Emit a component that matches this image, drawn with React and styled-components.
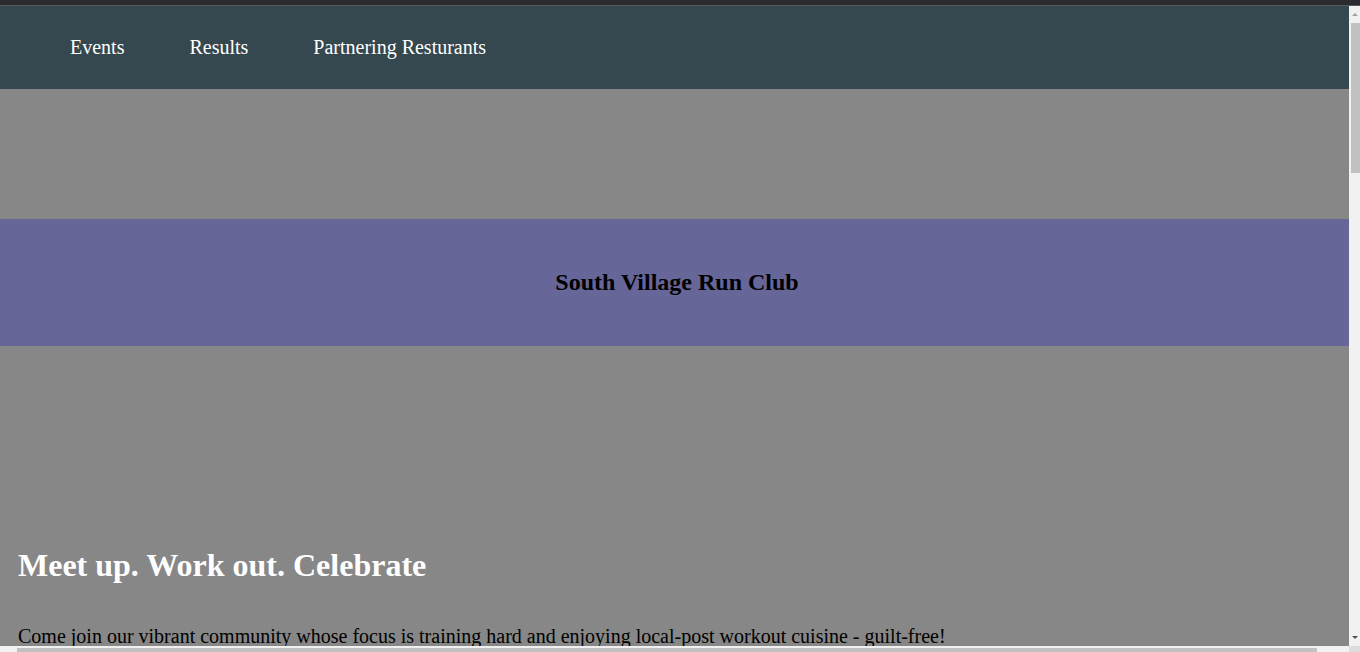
import React from 'react'
import styled, { createGlobalStyle } from 'styled-components'

const GlobalStyle = createGlobalStyle`
  html, body {
    margin: 0;
    padding: 0;
    height: 100%;
    overflow: hidden;
    font-family: "Liberation Serif", "Times New Roman", serif;
  }
  #root {
    height: 100%;
  }
`

// window shell: thin top strip, page viewport, and the scrollbars around it
const Frame = styled.div`
  display: grid;
  grid-template-columns: 1fr 11px;
  grid-template-rows: 6px 1fr 6px;
  height: 100%;
`

const TopStrip = styled.div`
  grid-column: 1 / 3;
  background: #2b2b2f;
  border-bottom: 1px solid #58595c;
`

const Scroller = styled.div`
  overflow: auto;
  min-height: 0;
  background: #878787;
  scrollbar-width: none;
  &::-webkit-scrollbar {
    display: none;
  }
`

const VBar = styled.div`
  display: flex;
  flex-direction: column;
  align-items: flex-end;
  background: #f1f1f1;
`

const Arrow = styled.div`
  width: 0;
  height: 0;
  margin: ${p => (p.down ? 'auto 2px 7px 0' : '7px 2px 0 0')};
  border-left: 3px solid transparent;
  border-right: 3px solid transparent;
  ${p => (p.down ? 'border-top: 3px solid #505050;' : 'border-bottom: 3px solid #a3a3a3;')}
`

const VThumb = styled.div`
  width: 9px;
  height: 150px;
  margin-top: 7px;
  background: #c1c1c1;
`

const HBar = styled.div`
  display: flex;
  align-items: flex-end;
  padding-left: 17px;
  background: #f1f1f1;
`

const HThumb = styled.div`
  width: 1300px;
  height: 4px;
  background: #c1c1c1;
`

const Corner = styled.div`
  background: #dcdcdc;
`

const Nav = styled.nav`
  display: flex;
  align-items: center;
  gap: 65px;
  height: 83px;
  padding-left: 70px;
  background: #35474f;
`

const NavLink = styled.a`
  color: #ffffff;
  font-size: 20px;
  text-decoration: none;
  cursor: pointer;
`

const Hero = styled.section`
  padding-top: 130px;
`

const Banner = styled.div`
  display: flex;
  align-items: center;
  justify-content: center;
  height: 127px;
  padding-left: 5px;
  background: #666699;
`

const BannerTitle = styled.h2`
  margin: 0;
  font-size: 24px;
  font-weight: bold;
  color: #000;
`

const Intro = styled.section`
  width: 100%;
  padding: 201px 18px 0;
`

const Headline = styled.h1`
  margin: 0;
  font-size: 32px;
  color: #ffffff;
`

const Lead = styled.p`
  margin: 41px 0 0;
  font-size: 20px;
  color: #000;
`

const Block = styled.section`
  padding: 40px 18px;
  min-height: ${p => p.tall}px;
`

const BlockTitle = styled.h2`
  margin: 0 0 16px;
  font-size: 26px;
  color: #fff;
`

const BlockText = styled.p`
  margin: 0;
  font-size: 20px;
  color: #000;
`

const sections = [
  { title: 'Upcoming Events', text: 'Weekly group runs every Tuesday and Saturday morning, starting at the village square.' },
  { title: 'Race Results', text: 'See how our members placed in the latest local 5K, 10K and half marathon races.' },
  { title: 'Partnering Resturants', text: 'Refuel after your run at one of our favourite neighbourhood spots.' },
]

export default function App() {
  return (
    <>
      <GlobalStyle />
      <Frame>
        <TopStrip />
        <Scroller>
          <Nav>
            <NavLink>Events</NavLink>
            <NavLink>Results</NavLink>
            <NavLink>Partnering Resturants</NavLink>
          </Nav>
          <Hero>
            <Banner>
              <BannerTitle>South Village Run Club</BannerTitle>
            </Banner>
          </Hero>
          <Intro>
            <Headline>Meet up. Work out. Celebrate</Headline>
            <Lead>Come join our vibrant community whose focus is training hard and enjoying local-post workout cuisine - guilt-free!</Lead>
          </Intro>
          {sections.map(s => (
            <Block key={s.title} tall={600}>
              <BlockTitle>{s.title}</BlockTitle>
              <BlockText>{s.text}</BlockText>
            </Block>
          ))}
        </Scroller>
        <VBar>
          <Arrow />
          <VThumb />
          <Arrow down />
        </VBar>
        <HBar>
          <HThumb />
        </HBar>
        <Corner />
      </Frame>
    </>
  )
}
